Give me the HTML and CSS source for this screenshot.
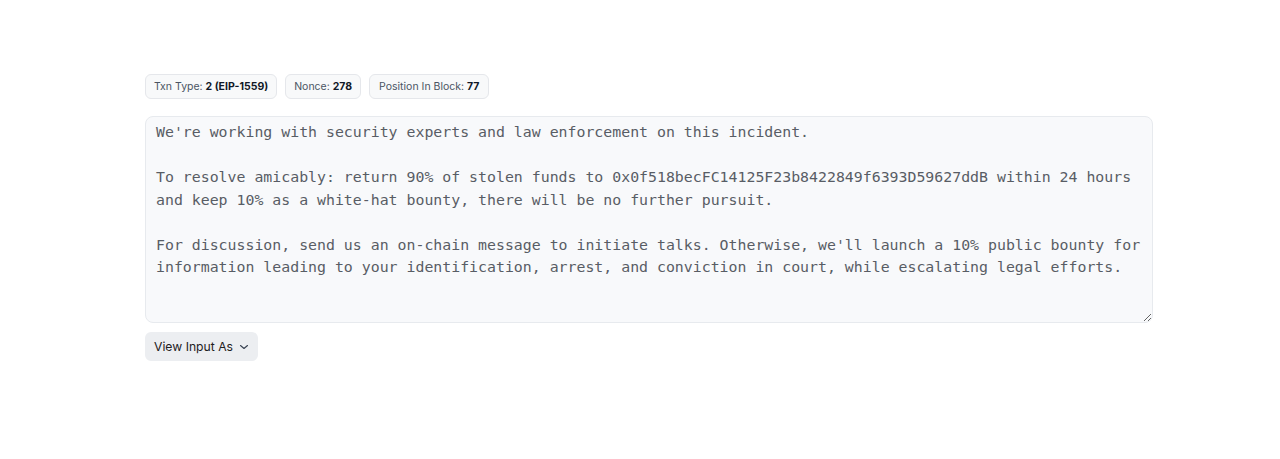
FILE: index.html
```html
<!DOCTYPE html>
<html>
<head>
<meta charset="utf-8">
<link rel="stylesheet" href="styles.css">
</head>
<body>
<main class="page">
  <div class="badges">
    <span class="badge">Txn Type: <b>2 (EIP-1559)</b></span>
    <span class="badge">Nonce: <b>278</b></span>
    <span class="badge">Position In Block: <b>77</b></span>
  </div>
  <textarea class="input-data" readonly>We're working with security experts and law enforcement on this incident.

To resolve amicably: return 90% of stolen funds to 0x0f518becFC14125F23b8422849f6393D59627ddB within 24 hours
and keep 10% as a white-hat bounty, there will be no further pursuit.

For discussion, send us an on-chain message to initiate talks. Otherwise, we'll launch a 10% public bounty for
information leading to your identification, arrest, and conviction in court, while escalating legal efforts.</textarea>
  <button class="view-btn">View Input As
    <svg width="10" height="10" viewBox="0 0 10 10"><path d="M1.5 3.5 L5 6.5 L8.5 3.5" fill="none" stroke="#374151" stroke-width="1.1" stroke-linecap="round" stroke-linejoin="round"/></svg>
  </button>
</main>
</body>
</html>
```
FILE: styles.css
```css
html, body {
  margin: 0;
  padding: 0;
  background: #ffffff;
}
body {
  font-family: Inter, "Liberation Sans", sans-serif;
  color: #1e2022;
}
.page {
  padding: 74px 0 0 145px;
  width: 1008px;
  display: flex;
  flex-direction: column;
  align-items: flex-start;
}
.badges {
  display: flex;
  gap: 8px;
  height: 25px;
}
.badge {
  display: inline-flex;
  align-items: center;
  box-sizing: border-box;
  height: 25px;
  padding: 0 8px;
  font-size: 10.5px;
  color: #4b5563;
  background: #f8f9fa;
  border: 1px solid #e5e7eb;
  border-radius: 6px;
  white-space: pre;
}
.badge:last-child {
  padding: 0 9px;
}
.badge b {
  color: #111827;
  font-weight: 700;
}
.input-data {
  margin-top: 17px;
  box-sizing: border-box;
  width: 1008px;
  height: 207px;
  padding: 4px 10px;
  font-family: "DejaVu Sans Mono", monospace;
  font-size: 14.87px;
  line-height: 22.5px;
  color: #585d65;
  background: #f8f9fb;
  border: 1px solid #e7eaee;
  border-radius: 8px;
  resize: vertical;
  white-space: pre;
  overflow: hidden;
  outline: none;
}
.view-btn {
  margin-top: 9px;
  display: inline-flex;
  align-items: center;
  gap: 6px;
  height: 29px;
  padding: 0 9px;
  font-family: Inter, "Liberation Sans", sans-serif;
  font-size: 12.2px;
  color: #1e2022;
  background: #eceef1;
  border: none;
  border-radius: 6px;
}
```
